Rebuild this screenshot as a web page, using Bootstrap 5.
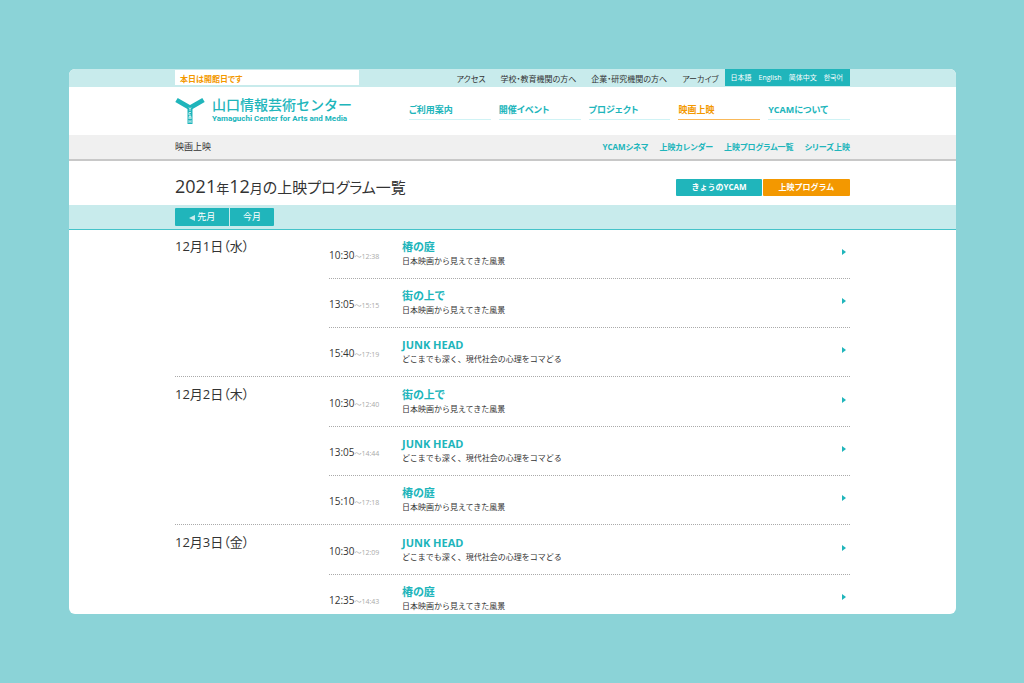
<!DOCTYPE html>
<html lang="ja">
<head>
<meta charset="utf-8">
<meta name="viewport" content="width=device-width, initial-scale=1">
<title>上映プログラム一覧 | YCAM</title>
<link href="https://cdn.jsdelivr.net/npm/bootstrap@5.3.0/dist/css/bootstrap.min.css" rel="stylesheet">
<style>
  :root { --teal: #20b5bb; --pale: #c8ebec; --orange: #f39800; }
  body {
    height: 100vh; padding: 69px 68px 69px 69px; background: #8bd3d7; color: #333;
    font-family: "Open Sans", "Noto Sans CJK JP", sans-serif;
    font-feature-settings: "palt"; font-size: 9px; line-height: 12px;
  }
  a { color: inherit; text-decoration: none; }
  h1, h2, h3, p, ul { margin: 0; font-weight: 400; }
  .site { background: #fff; border-radius: 6px; }
  .inner { width: 100%; max-width: 675px; margin: 0 auto; }
  .teal { color: var(--teal); }
  .topbar { background: var(--pale); height: 18px; font-size: 8px; }
  .notice { width: 184px; height: 15px; line-height: 17px; margin-top: 1px; padding-left: 5px; background: #fff; color: var(--orange); font-weight: 700; }
  .topnav { gap: 15px; line-height: 20px; }
  .langs { gap: 7px; height: 17px; line-height: 17px; padding: 0 7px 0 6px; margin-left: -9px; background: var(--teal); color: #fff; font-size: 7px; }
  .head { height: 48px; }
  .logo { gap: 7px; }
  .logo-text { gap: 2px; }
  .logo-ja { font: 500 14px/14px Roboto, "Noto Sans CJK JP", sans-serif; font-feature-settings: normal; }
  .logo-en { font: 700 8px/10px Roboto, sans-serif; }
  .mainnav { display: grid; grid-template-columns: repeat(5, 1fr); gap: 8px; width: 441px; }
  .mainnav a { height: 18px; line-height: 16px; border-bottom: 1px solid #d0f3f5; color: var(--teal); font-weight: 700; }
  .mainnav a.active { color: var(--orange); border-color: #f9b95a; }
  .subbar { background: #f0f0f0; height: 26px; border-bottom: 2px solid #c8c8c8; }
  .subbar .here { font-size: 9px; }
  .subnav { gap: 11px; color: var(--teal); font-weight: 700; font-size: 8px; }
  .titlebar { height: 44px; padding-top: 13px; }
  .titlebar h1 { font-size: 15px; line-height: 24px; }
  .titlebar .num { font-size: 18px; }
  .titlebar .unit { font-size: 13px; }
  .tabs { gap: 1px; }
  .tabs .btn, .months .btn { --bs-btn-color: #fff; --bs-btn-hover-color: #fff; --bs-btn-active-color: #fff; --bs-btn-padding-x: 0; --bs-btn-padding-y: 0; --bs-btn-border-width: 0; --bs-btn-line-height: 16px; }
  .tabs .btn { width: 86px; height: 17px; font-size: 8px; font-weight: 700; border-radius: 1px; background: var(--teal); }
  .tabs .btn.active { width: 87px; background: var(--orange); }
  .monthbar { background: var(--pale); height: 25px; border-bottom: 1px solid #45c3c9; }
  .months { gap: 1px; }
  .months .btn { height: 18px; width: 54px; background: var(--teal); border-radius: 1px 0 0 1px; font-size: 9px; --bs-btn-line-height: 18px; }
  .months .btn + .btn { width: 44px; border-radius: 0 1px 1px 0; }
  .day { border-bottom: 1px dotted #aaa; }
  .day + .day { padding-top: 1px; }
  .day h2 { width: 154px; font-size: 13px; line-height: 20px; padding-top: 6px; }
  .film { height: 49px; border-bottom: 1px dotted #aaa; padding: 0 4px 1px 0; }
  .film:last-child { height: 48px; border: 0; }
  .time { width: 73px; font-size: 10px; padding-top: 4px; white-space: nowrap; }
  .time small { font-size: 7px; color: #aaa; }
  .film svg { margin-bottom: 3px; }
  .film h3 { font-size: 11px; line-height: 14px; font-weight: 700; color: var(--teal); }
  .film p { font-size: 8px; line-height: 13px; font-feature-settings: normal; }
</style>
</head>
<body class="d-flex">
<div class="site flex-fill overflow-hidden">
  <div class="topbar">
    <div class="inner d-flex justify-content-between align-items-start">
      <p class="notice">本日は開館日です</p>
      <nav class="topnav d-flex" aria-label="サイト">
        <a href="#">アクセス</a><a href="#">学校・教育機関の方へ</a><a href="#">企業・研究機関の方へ</a><a href="#">アーカイブ</a>
        <div class="langs d-flex"><a href="#">日本語</a><a href="#" lang="en">English</a><a href="#" lang="zh-Hans">简体中文</a><a href="#" lang="ko">한국어</a></div>
      </nav>
    </div>
  </div>
  <header class="head">
    <div class="inner h-100 d-flex justify-content-between align-items-center">
      <a class="logo teal d-flex align-items-center" href="#" aria-label="山口情報芸術センター">
        <svg width="30" height="28" viewBox="0 0 30 28" aria-hidden="true">
          <path d="M1.500 3 15 10.800 28.500 3" fill="none" stroke="#20b5bb" stroke-width="4.800"/>
          <path d="M12.500 9h5v18h-5z" fill="#20b5bb"/>
          <path d="M14 10.500l1 1.500 1-1.500M15 12v2M16 15.500h-2v2.500h2M14 22v-2.500h2v2.500M14 21h2M14 26v-2.500l1 1 1-1v2.500" fill="none" stroke="#fff" stroke-width=".7"/>
        </svg>
        <span class="logo-text d-flex flex-column text-nowrap"><span class="logo-ja">山口情報芸術センター</span><span class="logo-en">Yamaguchi Center for Arts and Media</span></span>
      </a>
      <nav class="mainnav" aria-label="メイン">
        <a href="#">ご利用案内</a><a href="#">開催イベント</a><a href="#">プロジェクト</a><a class="active" href="#">映画上映</a><a href="#">YCAMについて</a>
      </nav>
    </div>
  </header>
  <div class="subbar">
    <div class="inner h-100 d-flex justify-content-between align-items-center">
      <span class="here">映画上映</span>
      <nav class="subnav d-flex" aria-label="映画上映"><a href="#">YCAMシネマ</a><a href="#">上映カレンダー</a><a href="#">上映プログラム一覧</a><a href="#">シリーズ上映</a></nav>
    </div>
  </div>
  <main>
    <div class="titlebar">
      <div class="inner d-flex justify-content-between align-items-center">
        <h1><span class="num">2021</span><span class="unit">年</span><span class="num">12</span><span class="unit">月</span>の上映プログラム一覧</h1>
        <div class="tabs d-flex"><button type="button" class="btn">きょうのYCAM</button><button type="button" class="btn active">上映プログラム</button></div>
      </div>
    </div>
    <div class="monthbar">
      <div class="inner months h-100 d-flex align-items-center"><button type="button" class="btn"><svg width="6" height="6" viewBox="0 0 6 6" aria-hidden="true"><path d="M6 0v6L0 3z" fill="#c8ebec"/></svg> 先月</button><button type="button" class="btn">今月</button></div>
    </div>
    <div class="inner" id="days"></div>
  </main>
</div>
<script src="https://cdn.jsdelivr.net/npm/bootstrap@5.3.0/dist/js/bootstrap.bundle.min.js"></script>
<script>
  const films = {
    niwa: ['椿の庭', '日本映画から見えてきた風景'],
    machi: ['街の上で', '日本映画から見えてきた風景'],
    junk: ['JUNK HEAD', 'どこまでも深く、現代社会の心理をコマどる']
  };
  const days = [
    ['12月1日（水）', [['10:30', '12:38', 'niwa'], ['13:05', '15:15', 'machi'], ['15:40', '17:19', 'junk']]],
    ['12月2日（木）', [['10:30', '12:40', 'machi'], ['13:05', '14:44', 'junk'], ['15:10', '17:18', 'niwa']]],
    ['12月3日（金）', [['10:30', '12:09', 'junk'], ['12:35', '14:43', 'niwa']]]
  ];
  document.getElementById('days').innerHTML = days.map(([date, list]) => `
    <section class="day d-flex"><h2 class="flex-shrink-0">${date}</h2><div class="flex-fill">${list.map(([from, to, key]) => `
      <a href="#" class="film d-flex align-items-center"><div class="time">${from}<small>～${to}</small></div>
        <div class="flex-fill"><h3>${films[key][0]}</h3><p>${films[key][1]}</p></div>
        <svg width="4" height="6" viewBox="0 0 4 6" aria-hidden="true"><path d="M0 0v6l4-3z" fill="#20b5bb"/></svg></a>`).join('')}
    </div></section>`).join('');
</script>
</body>
</html>
